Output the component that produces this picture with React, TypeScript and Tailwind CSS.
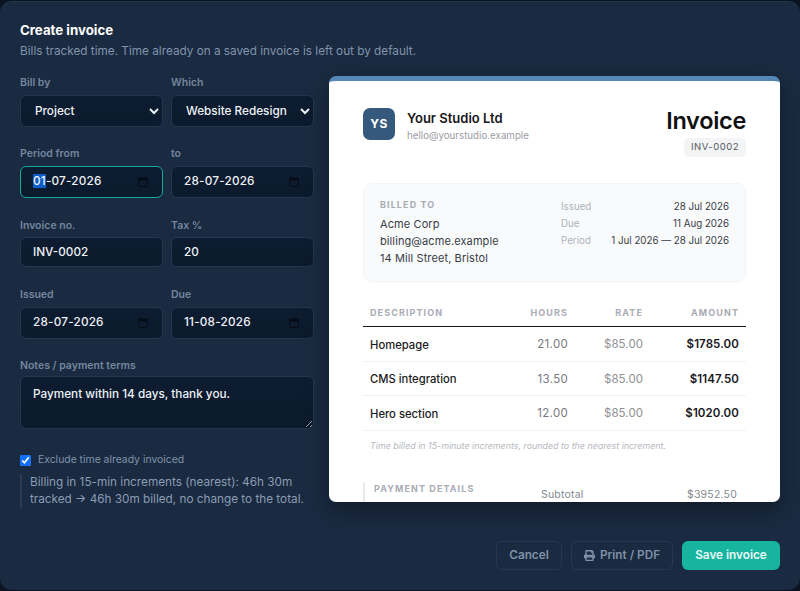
import { FaPrint } from "react-icons/fa";

const fieldClass =
  "block w-full rounded-[6px] border bg-[linear-gradient(180deg,#0d1c30,#0c1a2d)] text-[11.75px] font-medium text-[#eef2f7] outline-none";

const lines = [
  { name: "Homepage", hours: "21.00", rate: "$85.00", amount: "$1785.00", height: "h-[35px]" },
  { name: "CMS integration", hours: "13.50", rate: "$85.00", amount: "$1147.50", height: "h-[34px]" },
  { name: "Hero section", hours: "12.00", rate: "$85.00", amount: "$1020.00", height: "h-[35px]" },
];

function Label({ children }: { children: string }) {
  return <div className="h-[12px] text-[10.5px] leading-[12px] font-semibold text-[#74869e]">{children}</div>;
}

function CalendarGlyph() {
  return (
    <svg width="10" height="10" viewBox="0 0 10 10" className="text-[#060c15]">
      <rect x="0.5" y="1" width="9" height="8.5" rx="1" fill="none" stroke="currentColor" />
      <rect x="0.5" y="1" width="9" height="2.5" fill="currentColor" />
    </svg>
  );
}

function DateField({ label, value, active }: { label: string; value: string; active?: boolean }) {
  const [day, ...rest] = value.split("-");

  return (
    <div className="w-[143px]">
      <Label>{label}</Label>
      <div
        className={`${fieldClass} mt-[6px] flex h-[32px] items-center justify-between pr-[14px] pl-[12px] ${
          active ? "border-[#15a896]" : "border-[#24364e]"
        }`}
      >
        <span className="tracking-[0.2px]">
          <span className={active ? "bg-[#0f5ec9]" : ""}>{day}</span>-{rest.join("-")}
        </span>
        <CalendarGlyph />
      </div>
    </div>
  );
}

function SelectField({ label, value, options }: { label: string; value: string; options: string[] }) {
  return (
    <div className="w-[143px]">
      <Label>{label}</Label>
      <select defaultValue={value} className={`${fieldClass} mt-[6px] h-[32px] border-[#24364e] pl-[10px]`}>
        {options.map((option) => (
          <option key={option}>{option}</option>
        ))}
      </select>
    </div>
  );
}

function TextField({ label, value }: { label: string; value: string }) {
  return (
    <div className="w-[143px]">
      <Label>{label}</Label>
      <input defaultValue={value} className={`${fieldClass} mt-[5px] h-[30px] border-[#24364e] px-[12px]`} />
    </div>
  );
}

function InvoicePreview() {
  return (
    <div className="h-[426px] w-[451px] overflow-hidden rounded-[7px] border-t-[5px] border-[#5587b8] bg-white px-[34px] pt-[27px] shadow-[0_8px_24px_rgba(0,0,0,0.35)]">
      <div className="flex justify-between">
        <div className="flex gap-[12px]">
          <div className="flex size-[32px] items-center justify-center rounded-[7px] bg-[#34597c] text-[12px] font-bold tracking-[0.5px] text-white">
            YS
          </div>
          <div>
            <div className="text-[13px] leading-[20px] font-semibold text-[#17171c]">Your Studio Ltd</div>
            <div className="mt-[1px] text-[9.75px] leading-[14px] text-[#9a9ca3]">hello@yourstudio.example</div>
          </div>
        </div>
        <div className="flex flex-col items-end">
          <div className="text-[23.5px] leading-[26px] font-semibold tracking-[-0.3px] text-[#111114]">Invoice</div>
          <div className="mt-[4px] flex h-[19px] items-center rounded-[5px] bg-[#f3f4f6] px-[7px] text-[9.5px] tracking-[0.5px] text-[#55575e]">
            INV-0002
          </div>
        </div>
      </div>

      <div className="mt-[26px] flex h-[99px] justify-between rounded-[9px] border border-[#f1f3f6] bg-[#f8fafc] px-[16px] pt-[15px]">
        <div>
          <div className="text-[9px] leading-[12px] font-bold tracking-[1.1px] text-[#a9acb5]">BILLED TO</div>
          <div className="mt-[5px] text-[11px] leading-[17px] tracking-[0.1px] text-[#3a3c44]">
            <div>Acme Corp</div>
            <div>billing@acme.example</div>
            <div>14 Mill Street, Bristol</div>
          </div>
        </div>
        <div className="mt-[-1px] w-[168px] text-[9.75px] leading-[17px]">
          {[
            ["Issued", "28 Jul 2026"],
            ["Due", "11 Aug 2026"],
            ["Period", "1 Jul 2026 — 28 Jul 2026"],
          ].map(([key, value]) => (
            <div key={key} className="flex justify-between">
              <span className="text-[#b0b2b9]">{key}</span>
              <span className="text-[#3a3c44]">{value}</span>
            </div>
          ))}
        </div>
      </div>

      <table className="mt-[21px] w-full border-collapse">
        <thead>
          <tr className="h-[23px] border-b-[1.5px] border-[#17171c] text-[9px] font-bold tracking-[1.1px] text-[#a9acb5]">
            <th className="pb-[4px] pl-[7px] text-left font-bold">DESCRIPTION</th>
            <th className="w-[70px] pb-[4px] text-right font-bold">HOURS</th>
            <th className="w-[75px] pb-[4px] text-right font-bold">RATE</th>
            <th className="w-[103px] pr-[7px] pb-[4px] text-right font-bold">AMOUNT</th>
          </tr>
        </thead>
        <tbody>
          {lines.map((line) => (
            <tr key={line.name} className={`${line.height} border-b border-[#f1f2f4]`}>
              <td className="pt-[3px] pl-[7px] text-[11.25px] font-medium text-[#1b1b20]">{line.name}</td>
              <td className="pt-[3px] text-right text-[11.5px] tracking-[0.3px] text-[#777980]">{line.hours}</td>
              <td className="pt-[3px] text-right text-[11.5px] tracking-[0.05px] text-[#8f9095]">{line.rate}</td>
              <td className="pt-[3px] pr-[7px] text-right text-[11.5px] font-semibold tracking-[0.1px] text-[#17171c]">
                {line.amount}
              </td>
            </tr>
          ))}
        </tbody>
      </table>

      <div className="mt-[9px] pl-[7px] text-[8.9px] leading-[12px] text-[#b6b8be] italic">
        Time billed in 15-minute increments, rounded to the nearest increment.
      </div>

      <div className="mt-[30px] flex border-l-2 border-[#e9ebef] pl-[9px]">
        <div className="w-[167px] pt-[1px] text-[9px] leading-[12px] font-bold tracking-[1.1px] text-[#a9acb5]">
          PAYMENT DETAILS
        </div>
        <div className="flex w-[196px] justify-between pt-[6px] text-[10.5px] leading-[14px] tracking-[0.2px] text-[#85878e]">
          <span>Subtotal</span>
          <span>$3952.50</span>
        </div>
      </div>
    </div>
  );
}

export default function App() {
  return (
    <div
      className="h-[591px] w-[800px] overflow-hidden bg-[#0a1320] pt-px text-[13px]"
      style={{ fontFamily: "Inter, sans-serif" }}
    >
      <div className="h-[589px] w-[800px] rounded-[12px] border-t border-[#24364e] bg-[#1a2a40]">
        <div className="px-[20px] pt-[20px]">
          <h1 className="text-[13.25px] leading-[17px] font-bold text-white">Create invoice</h1>
          <p className="mt-[4px] text-[11.75px] leading-[16px] text-[#8194ad]">
            Bills tracked time. Time already on a saved invoice is left out by default.
          </p>
        </div>

        <div className="mt-[17px] flex gap-[15px] pl-[20px]">
          <div className="mt-px w-[294px]">
            <div className="flex gap-[8px]">
              <SelectField label="Bill by" value="Project" options={["Project", "Client"]} />
              <SelectField label="Which" value="Website Redesign" options={["Website Redesign"]} />
            </div>
            <div className="mt-[21px] flex gap-[8px]">
              <DateField label="Period from" value="01-07-2026" active />
              <DateField label="to" value="28-07-2026" />
            </div>
            <div className="mt-[22px] flex gap-[8px]">
              <TextField label="Invoice no." value="INV-0002" />
              <TextField label="Tax %" value="20" />
            </div>
            <div className="mt-[22px] flex gap-[8px]">
              <DateField label="Issued" value="28-07-2026" />
              <DateField label="Due" value="11-08-2026" />
            </div>

            <div className="mt-[21px]">
              <Label>Notes / payment terms</Label>
              <textarea
                defaultValue="Payment within 14 days, thank you."
                className={`${fieldClass} mt-[4px] h-[53px] border-[#24364e] px-[12px] py-[9px] leading-[17px]`}
              />
            </div>

            <label className="mt-[23px] flex items-center gap-[7px] text-[10.4px] leading-[16px] text-[#8093ac]">
              <input type="checkbox" defaultChecked className="m-0 size-[11px] accent-[#0f6fff]" />
              Exclude time already invoiced
            </label>

            <div className="mt-[6px] border-l-2 border-[#2a3c55] pl-[8px] text-[11.75px] leading-[17px] text-[#8b9cb4]">
              Billing in 15-min increments (nearest): 46h 30m tracked → 46h 30m billed, no change to the total.
            </div>
          </div>

          <InvoicePreview />
        </div>

        <div className="mt-[33px] flex justify-end gap-[9px] pr-[20px]">
          <button className="h-[29px] w-[66px] rounded-[6px] border border-[#27394f] text-[11.75px] font-semibold text-[#7f91a9]">
            Cancel
          </button>
          <button className="flex h-[29px] w-[102px] items-center justify-center gap-[5px] rounded-[6px] border border-[#27394f] text-[11.75px] font-semibold text-[#7f91a9]">
            <FaPrint size={11} />
            Print / PDF
          </button>
          <button className="h-[29px] w-[98px] rounded-[6px] bg-[#17b5a0] text-[11.75px] font-semibold text-[#eafaf7]">
            Save invoice
          </button>
        </div>
      </div>
    </div>
  );
}
